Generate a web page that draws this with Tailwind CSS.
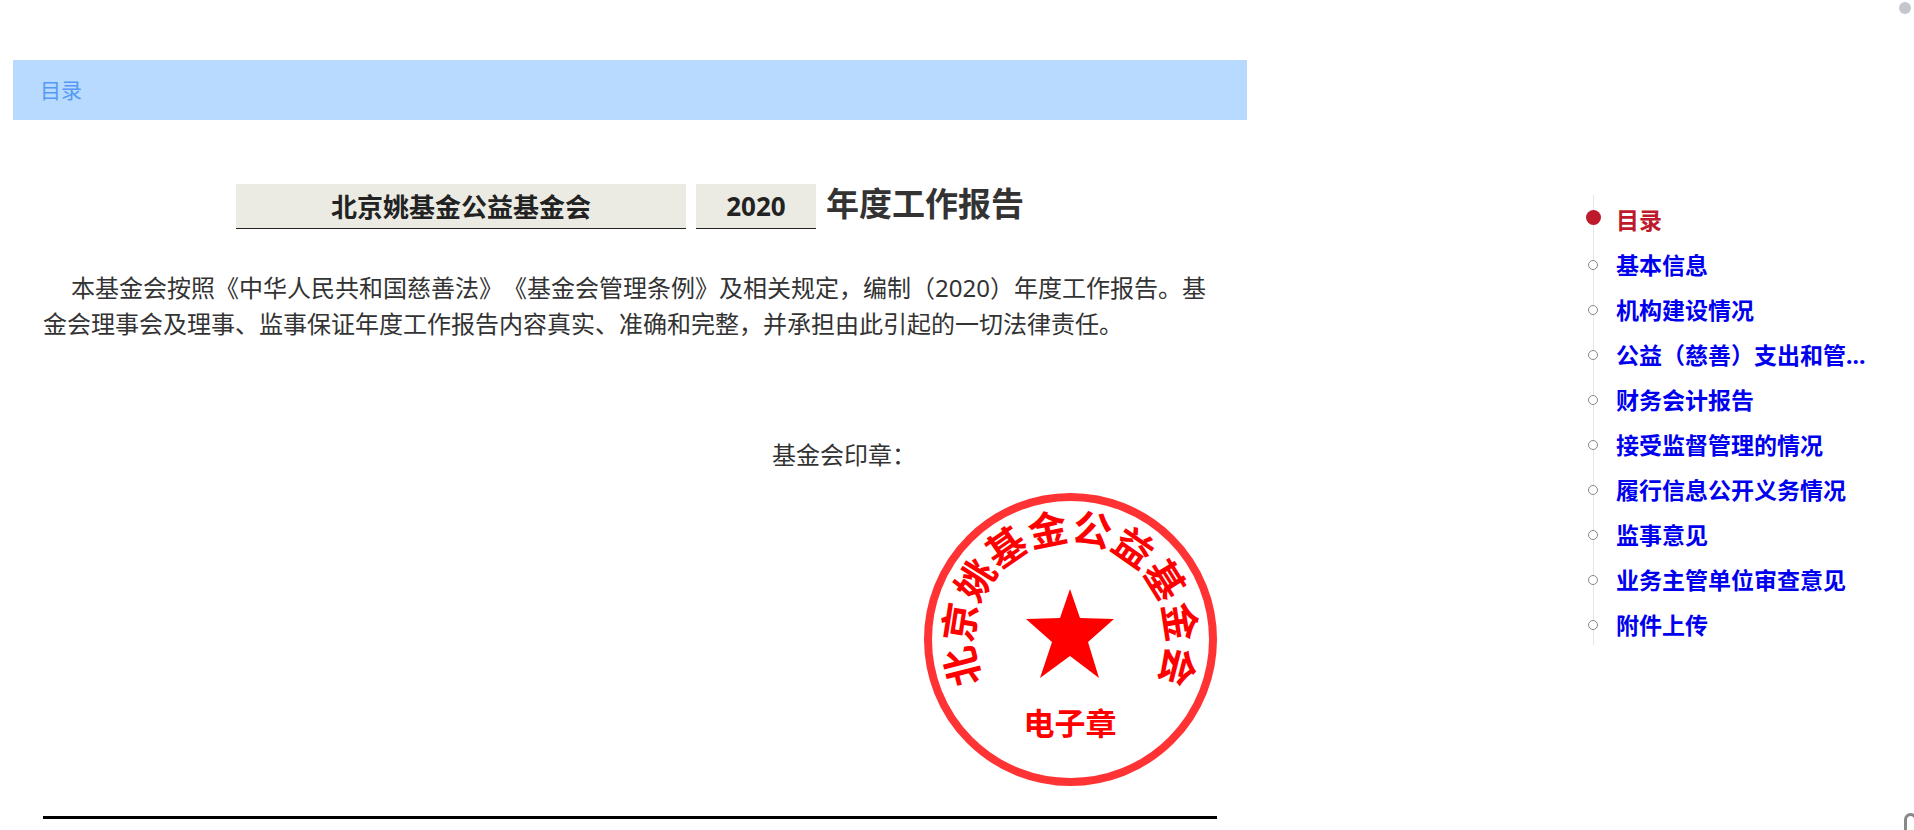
<!DOCTYPE html>
<html lang="zh-CN">
<head>
    <meta charset="UTF-8">
    <meta name="viewport" content="width=device-width, initial-scale=1.0">
    <title>年度工作报告</title>
    <script src="https://cdn.jsdelivr.net/npm/@tailwindcss/browser@4"></script>
    <style>
        body {
            font-family: 'Noto Sans', 'Noto Sans CJK SC', sans-serif;
            text-spacing-trim: space-all;
        }
    </style>
</head>
<body class="bg-white text-[#333] overflow-hidden">
    <div class="grid grid-cols-[1234fr_667fr] pl-[13px] pt-15">
        <main>
            <h2 class="bg-[#b8daff] text-[#5599f7] text-[21px] leading-[60px] px-[27px]">目录</h2>
            <div class="px-[30px]">
                <div class="flex justify-center gap-[10px] pt-16">
                    <input type="text" aria-label="基金会名称" value="北京姚基金公益基金会" readonly class="w-[450px] h-[45px] bg-[#ebebe4] border-b border-[#222] text-[#222] text-[26px] font-bold text-center">
                    <input type="text" aria-label="年度" value="2020" readonly class="w-[120px] h-[45px] bg-[#ebebe4] border-b border-[#222] text-[#222] text-[26px] font-bold text-center">
                    <h1 class="text-[33px] leading-[40px] font-bold">年度工作报告</h1>
                </div>
                <p class="mt-[41px] text-2xl leading-9 indent-7">本基金会按照《中华人民共和国慈善法》《基金会管理条例》及相关规定，编制（2020）年度工作报告。基金会理事会及理事、监事保证年度工作报告内容真实、准确和完整，并承担由此引起的一切法律责任。</p>
                <div class="flex flex-col items-end mt-[95px] pb-[30px] border-b-3 border-black">
                    <p class="w-[445px] text-2xl leading-9">基金会印章：</p>
                    <svg class="mt-5 size-[293px]" viewBox="0 0 293 293" role="img" aria-label="电子章">
                        <circle cx="146.5" cy="146.5" r="142.5" fill="none" stroke="#ff3333" stroke-width="8"/>
                        <polygon fill="#ff0000" points="146,96 156,125 190,126 164,149 175,185 146,163 116,185 128,149 102,126 136,125"/>
                        <g fill="#ff0000" font-size="39" font-weight="700" text-anchor="middle">
                            <text x="146" y="49" transform="rotate(-104.4 146 146)">北</text>
                            <text x="146" y="49" transform="rotate(-81.2 146 146)">京</text>
                            <text x="146" y="49" transform="rotate(-58 146 146)">姚</text>
                            <text x="146" y="49" transform="rotate(-34.8 146 146)">基</text>
                            <text x="146" y="49" transform="rotate(-11.6 146 146)">金</text>
                            <text x="146" y="49" transform="rotate(11.6 146 146)">公</text>
                            <text x="146" y="49" transform="rotate(34.8 146 146)">益</text>
                            <text x="146" y="49" transform="rotate(58 146 146)">基</text>
                            <text x="146" y="49" transform="rotate(81.2 146 146)">金</text>
                            <text x="146" y="49" transform="rotate(104.4 146 146)">会</text>
                        </g>
                        <text x="146" y="242" fill="#ff0000" font-size="31" font-weight="700" text-anchor="middle">电子章</text>
                    </svg>
                </div>
            </div>
        </main>

        <aside class="flex justify-end pt-[135px]">
            <nav class="w-[321px]" aria-label="目录">
                <ul class="border-l border-[#e6e6e6] text-[23px] leading-[45px] font-bold text-[#0000ee]">
                    <li class="flex -ml-2 text-[#be1a2c]">
                        <span class="mt-[15px] size-[15px] rounded-full bg-[#be1a2c]"></span>
                        <a href="#catalog" class="ml-[15px] mt-[3px] h-[42px]">目录</a>
                    </li>
                    <li class="flex -ml-[6px]">
                        <span class="mt-5 size-[10px] rounded-full border border-[#888] bg-white"></span>
                        <a href="#info" class="ml-[18px] mt-[3px] h-[42px]">基本信息</a>
                    </li>
                    <li class="flex -ml-[6px]">
                        <span class="mt-5 size-[10px] rounded-full border border-[#888] bg-white"></span>
                        <a href="#build" class="ml-[18px] mt-[3px] h-[42px]">机构建设情况</a>
                    </li>
                    <li class="flex -ml-[6px]">
                        <span class="mt-5 size-[10px] rounded-full border border-[#888] bg-white"></span>
                        <a href="#cost" class="ml-[18px] mt-[3px] h-[42px]">公益（慈善）支出和管...</a>
                    </li>
                    <li class="flex -ml-[6px]">
                        <span class="mt-5 size-[10px] rounded-full border border-[#888] bg-white"></span>
                        <a href="#finance" class="ml-[18px] mt-[3px] h-[42px]">财务会计报告</a>
                    </li>
                    <li class="flex -ml-[6px]">
                        <span class="mt-5 size-[10px] rounded-full border border-[#888] bg-white"></span>
                        <a href="#supervise" class="ml-[18px] mt-[3px] h-[42px]">接受监督管理的情况</a>
                    </li>
                    <li class="flex -ml-[6px]">
                        <span class="mt-5 size-[10px] rounded-full border border-[#888] bg-white"></span>
                        <a href="#publish" class="ml-[18px] mt-[3px] h-[42px]">履行信息公开义务情况</a>
                    </li>
                    <li class="flex -ml-[6px]">
                        <span class="mt-5 size-[10px] rounded-full border border-[#888] bg-white"></span>
                        <a href="#supervisor" class="ml-[18px] mt-[3px] h-[42px]">监事意见</a>
                    </li>
                    <li class="flex -ml-[6px]">
                        <span class="mt-5 size-[10px] rounded-full border border-[#888] bg-white"></span>
                        <a href="#review" class="ml-[18px] mt-[3px] h-[42px]">业务主管单位审查意见</a>
                    </li>
                    <li class="flex -ml-[6px]">
                        <span class="mt-5 size-[10px] rounded-full border border-[#888] bg-white"></span>
                        <a href="#attach" class="ml-[18px] mt-[3px] h-[42px]">附件上传</a>
                    </li>
                </ul>
            </nav>
        </aside>
    </div>

    <!-- floating marks at the window edge -->
    <span class="fixed top-[2px] right-[3px] size-3 rounded-full bg-[#c5c5cc]"></span>
    <svg class="fixed right-0 bottom-0 w-[10px] h-[18px]" viewBox="0 0 10 18" fill="none" stroke="#888" stroke-width="3" aria-hidden="true">
        <path d="M1.5 18V7.5a5 5 0 0 1 10 0V18"/>
    </svg>
</body>
</html>
